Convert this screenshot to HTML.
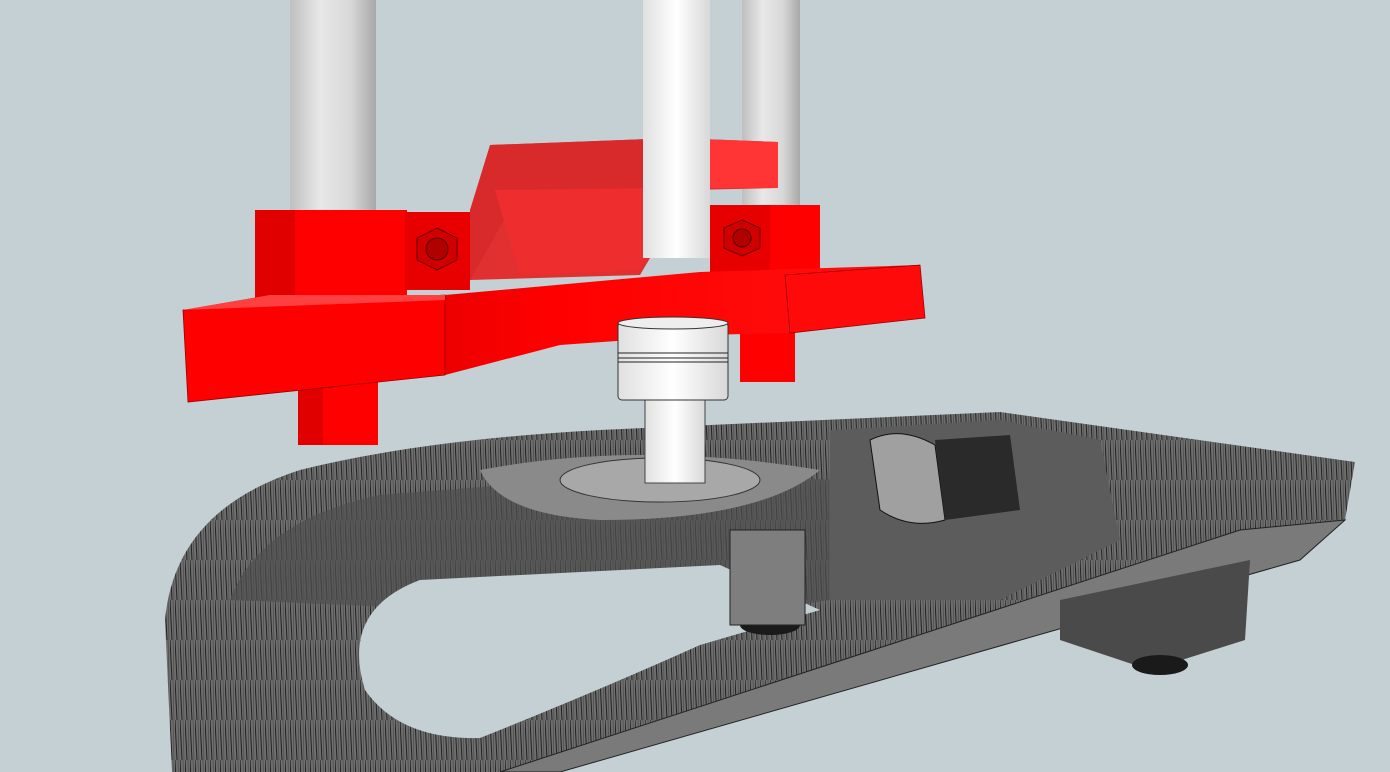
<!DOCTYPE html>
<html><head><meta charset="utf-8"><style>
html,body{margin:0;padding:0;background:#c4d0d4;overflow:hidden}
svg{display:block}
</style></head><body>
<svg width="1390" height="772" viewBox="0 0 1390 772" xmlns="http://www.w3.org/2000/svg">
<defs>
<linearGradient id="rod" x1="0" x2="1" y1="0" y2="0">
<stop offset="0" stop-color="#bfbfbf"/><stop offset="0.35" stop-color="#e8e8e8"/><stop offset="0.7" stop-color="#d8d8d8"/><stop offset="1" stop-color="#a8a8a8"/></linearGradient>
<linearGradient id="wrod" x1="0" x2="1"><stop offset="0" stop-color="#e0e0e0"/><stop offset="0.5" stop-color="#ffffff"/><stop offset="1" stop-color="#d8d8d8"/></linearGradient>
<linearGradient id="arm" x1="0" x2="1"><stop offset="0" stop-color="#c00000"/><stop offset="0.5" stop-color="#ff0000"/><stop offset="1" stop-color="#ff1010"/></linearGradient>
<pattern id="mesh" width="5" height="40" patternUnits="userSpaceOnUse"><rect width="5" height="40" fill="#6e6e6e"/><line x1="0" y1="0" x2="2" y2="40" stroke="#222" stroke-width="1"/><line x1="3" y1="0" x2="4" y2="40" stroke="#444" stroke-width="0.6"/></pattern>
</defs>
<rect width="1390" height="772" fill="#c4d0d4"/>
<rect x="290" y="0" width="86" height="215" fill="url(#rod)"/>
<rect x="742" y="0" width="58" height="210" fill="url(#rod)"/>
<!-- gray base -->
<path d="M165 620 Q175 510 300 470 Q420 440 600 430 L1000 412 L1355 462 L1345 520 L1300 560 L560 772 L172 772 Z" fill="url(#mesh)"/>
<path d="M230 600 Q260 520 380 495 L700 470 L830 480 L830 600 L700 620 Z" fill="#4e4e4e" opacity="0.7"/>
<path d="M480 470 Q640 440 820 470 Q760 520 600 520 Q500 515 480 470 Z" fill="#8a8a8a"/>
<ellipse cx="660" cy="480" rx="100" ry="22" fill="#a8a8a8" stroke="#333"/>
<path d="M365 690 Q340 610 420 580 L720 565 L820 610 L700 645 Q600 690 480 738 Q400 740 365 690 Z" fill="#c4d0d4"/>
<path d="M830 430 L1000 420 L1100 440 L1120 540 L1000 600 L830 600 Z" fill="#5c5c5c"/>
<path d="M560 772 L1300 560 L1345 520 L1240 530 L500 772 Z" fill="#7a7a7a" stroke="#222"/>
<path d="M1060 600 L1250 560 L1245 640 L1150 670 L1060 640 Z" fill="#4a4a4a"/>
<ellipse cx="1160" cy="665" rx="28" ry="10" fill="#1a1a1a"/>
<ellipse cx="770" cy="625" rx="30" ry="10" fill="#1a1a1a"/>
<rect x="730" y="530" width="75" height="95" fill="#7e7e7e" stroke="#222"/>
<path d="M870 440 Q900 425 935 445 L945 520 Q910 530 880 510 Z" fill="#a0a0a0" stroke="#111"/>
<path d="M935 440 L1010 435 L1020 510 L945 520 Z" fill="#2a2a2a"/>
<!-- red top block -->
<polygon points="490,145 675,138 778,142 778,188 690,190 640,275 470,280" fill="#e03030"/>
<polygon points="490,145 675,138 675,188 520,192 470,280 470,210" fill="#d82a2a"/>
<polygon points="675,138 778,142 778,188 675,188" fill="#ff3535"/>
<polygon points="495,190 675,188 640,270 520,275" fill="#ee2e2e"/>
<rect x="643" y="0" width="67" height="258" fill="url(#wrod)"/>
<rect x="255" y="210" width="152" height="92" fill="#ff0000"/>
<rect x="255" y="210" width="40" height="92" fill="#e00000"/>
<rect x="405" y="212" width="65" height="78" fill="#e80000"/>
<polygon points="437,228 457,238 457,260 437,270 417,260 417,238" fill="#d00000" stroke="#600" stroke-width="1"/>
<circle cx="437" cy="249" r="11" fill="#b00000" stroke="#500"/>
<rect x="710" y="205" width="110" height="68" fill="#ff0000"/>
<rect x="710" y="205" width="60" height="68" fill="#e60000"/>
<polygon points="742,220 760,228 760,248 742,256 724,248 724,228" fill="#d00000" stroke="#600"/>
<circle cx="742" cy="238" r="9" fill="#b00000" stroke="#500"/>
<rect x="298" y="380" width="80" height="65" fill="#ff0000"/>
<rect x="298" y="380" width="25" height="65" fill="#e00000"/>
<rect x="740" y="325" width="55" height="57" fill="#ff0000"/>
<polygon points="183,310 270,295 445,295 700,272 920,265 925,318 790,333 700,335 560,345 445,375 188,402" fill="url(#arm)"/>
<polygon points="183,310 445,295 445,375 188,402" fill="#ff0000" stroke="#900" stroke-width="0.8"/>
<polygon points="785,275 920,265 925,318 790,333" fill="#ff0a0a" stroke="#900" stroke-width="0.8"/>
<polygon points="183,310 270,295 445,295 445,300" fill="#ff4040"/>
<rect x="645" y="398" width="60" height="85" fill="url(#wrod)" stroke="#444"/>
<rect x="618" y="322" width="110" height="78" rx="4" fill="url(#wrod)" stroke="#333"/>
<ellipse cx="673" cy="323" rx="55" ry="6" fill="#eee" stroke="#333"/>
<line x1="618" y1="353" x2="728" y2="353" stroke="#222"/>
<line x1="618" y1="358" x2="728" y2="358" stroke="#222"/>
<line x1="618" y1="362" x2="728" y2="362" stroke="#222"/>
</svg>
</body></html>
